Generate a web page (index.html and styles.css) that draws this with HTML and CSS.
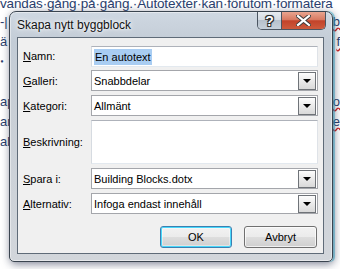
FILE: index.html
```html
<!DOCTYPE html>
<html lang="sv">
<head>
<meta charset="utf-8">
<link rel="stylesheet" href="styles.css">
</head>
<body>
<div class="doc">
  <p class="doc-line first">vandas·gång·på·gång.·Autotexter·kan·förutom·formatera</p>
  <p class="doc-line">-| <span class="r">b</span></p>
  <p class="doc-line">ä <span class="r">f</span></p>
  <p class="doc-line">ꞏ</p>
  <p class="doc-line">&nbsp;</p>
  <p class="doc-line">ap <span class="r">o</span></p>
  <p class="doc-line">ar <span class="r">e</span></p>
  <p class="doc-line">ab</p>
</div>
<div class="dialog">
  <div class="titlebar">
    <span class="title">Skapa nytt byggblock</span>
    <div class="caption-btns">
      <div class="cap help">?</div>
      <div class="cap close">
        <svg width="15" height="11" viewBox="0 0 15 11"><path d="M2 1 L13 10 M13 1 L2 10" stroke="#3a3a3a" stroke-width="4" stroke-linecap="square"/><path d="M2 1 L13 10 M13 1 L2 10" stroke="#fff" stroke-width="2.2" stroke-linecap="square"/></svg>
      </div>
    </div>
  </div>
  <div class="panel">
    <div class="form">
      <label class="lbl"><u>N</u>amn:</label>
      <div class="field text"><span class="sel">En autotext</span></div>
      <label class="lbl"><u>G</u>alleri:</label>
      <div class="field combo"><span>Snabbdelar</span><span class="drop"></span></div>
      <label class="lbl"><u>K</u>ategori:</label>
      <div class="field combo"><span>Allmänt</span><span class="drop"></span></div>
      <label class="lbl"><u>B</u>eskrivning:</label>
      <div class="field text area"></div>
      <label class="lbl"><u>S</u>para i:</label>
      <div class="field combo"><span>Building Blocks.dotx</span><span class="drop"></span></div>
      <label class="lbl"><u>A</u>lternativ:</label>
      <div class="field combo"><span>Infoga endast innehåll</span><span class="drop"></span></div>
    </div>
    <div class="buttons">
      <div class="btn default">OK</div>
      <div class="btn">Avbryt</div>
    </div>
  </div>
</div>
</body>
</html>
```
FILE: styles.css
```css
* { box-sizing: border-box; }
html, body { margin: 0; padding: 0; }
body {
  width: 340px;
  height: 269px;
  overflow: hidden;
  position: relative;
  background: #ffffff;
  font-family: "Liberation Sans", Arial, sans-serif;
}
.doc {
  color: #2b3f6e;
  font-family: "Liberation Sans", Arial, sans-serif;
  font-size: 13px;
}
.doc-line {
  margin: 0;
  height: 20px;
  line-height: 20px;
  white-space: nowrap;
  display: flex;
  justify-content: space-between;
}
.doc-line.first {
  height: 14px;
  line-height: 11px;
  font-size: 13.5px;
  margin-top: -2px;
  letter-spacing: -0.15px;
  justify-content: flex-start;
}
.doc-line .r { text-decoration: underline wavy #d02020; }

.dialog {
  position: absolute;
  left: 9px;
  top: 11px;
  width: 324px;
  height: 251px;
  padding: 0 8px 7px 7px;
  border: 1px solid #3b4550;
  border-radius: 7px 7px 5px 5px;
  background: linear-gradient(180deg, #cfd8e2 0%, #c3ccd6 12%, #c9cfd6 40%, #d2d6db 100%);
  box-shadow: 0 0 0 1px rgba(255,255,255,0.45) inset, 1px 2px 8px rgba(20,30,60,0.55), 2px 0 0 rgba(60,200,230,0.5);
  display: flex;
  flex-direction: column;
}
.titlebar {
  height: 25px;
  display: flex;
  justify-content: space-between;
  align-items: flex-start;
}
.title {
  margin-top: 6px;
  font-size: 12px;
  color: #111;
  text-shadow: 0 0 6px #fff, 0 0 3px #fff;
}
.caption-btns {
  display: flex;
  margin-right: -2px;
  border: 1px solid #4b5561;
  border-top: none;
  border-radius: 0 0 5px 5px;
  overflow: hidden;
}
.cap {
  height: 17px;
  display: flex;
  align-items: center;
  justify-content: center;
}
.help {
  width: 24px;
  border-right: 1px solid #4b5561;
  background: linear-gradient(180deg, #e6ebf0 0%, #d4dbe3 45%, #b7c1cc 50%, #c6d0da 100%);
  color: #fff;
  font-weight: bold;
  font-size: 14px;
  text-shadow: 0 0 2px #222, 0 0 1px #222, 1px 1px 0 #333, -1px -1px 0 #333, 1px -1px 0 #333, -1px 1px 0 #333;
}
.close {
  width: 43px;
  background: linear-gradient(180deg, #e8a48f 0%, #d87a62 45%, #c2432a 52%, #cd5a3c 100%);
}

.panel {
  flex: 1;
  background: #f0f0f0;
  border: 1px solid #5f6b78;
  display: flex;
  flex-direction: column;
  padding: 8px 5px 0 5px;
}
.form {
  display: grid;
  grid-template-columns: 68px 1fr;
  grid-template-rows: 20px 21px 21px 44px 21px 21px;
  row-gap: 4px;
  font-size: 11px;
  color: #000;
}
.form > .field:first-of-type { margin-bottom: -1px; }
.lbl {
  display: flex;
  align-items: center;
}
.field {
  background: #fff;
  border: 1px solid #abadb3;
  display: flex;
  align-items: center;
  padding-left: 2px;
}
.field.text { border-color: #b8bcc4 #dfe3e8 #e3e9ef #d6dbe1; border-top-color: #aeb2ba; }
.sel {
  background: #a9cdf2;
  padding: 1px 1px;
  line-height: 14px;
}
.combo {
  border-color: #a4a6ab;
  justify-content: space-between;
  padding-right: 1px;
}
.drop {
  width: 18px;
  height: 18px;
  border: 1px solid #6f7378;
  background: linear-gradient(180deg, #fdfdfd 0%, #eaeaea 50%, #d9d9d9 100%);
  position: relative;
}
.drop::after {
  content: "";
  position: absolute;
  left: 4px;
  top: 6px;
  border-left: 4px solid transparent;
  border-right: 4px solid transparent;
  border-top: 4px solid #000;
}
.buttons {
  display: flex;
  justify-content: flex-end;
  gap: 12px;
  margin-top: 12px;
  padding-right: 1px;
}
.btn {
  width: 73px;
  height: 22px;
  border: 1px solid #707070;
  border-radius: 3px;
  background: linear-gradient(180deg, #f2f2f2 0%, #ebebeb 50%, #dddddd 51%, #cfcfcf 100%);
  box-shadow: inset 0 0 0 1px rgba(255,255,255,0.7);
  font-size: 11px;
  display: flex;
  align-items: center;
  justify-content: center;
  color: #000;
}
.btn.default {
  width: 72px;
  border-color: #3c7fb1;
  box-shadow: inset 0 0 0 1px #48d8fb, inset 0 0 0 2px rgba(255,255,255,0.4);
}
```
